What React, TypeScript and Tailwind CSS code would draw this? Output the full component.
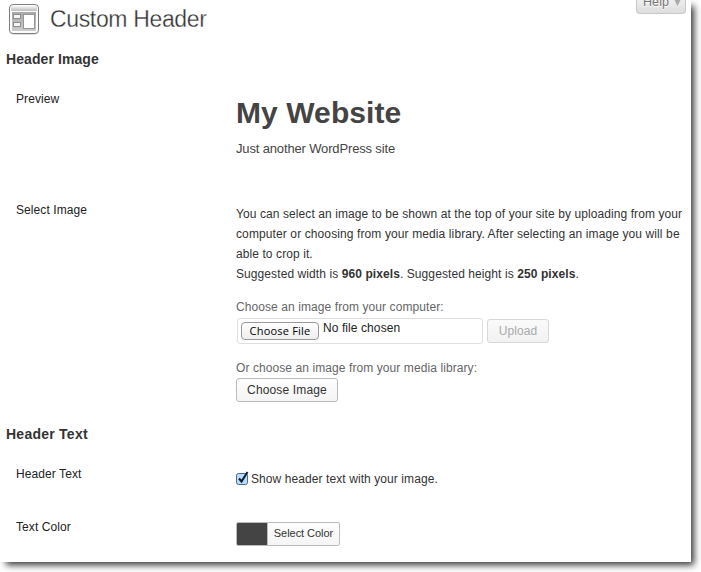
import type { ReactNode } from 'react'

function HeaderIcon() {
  return (
    <svg width="32" height="34" viewBox="0 0 32 34" className="block">
      <defs>
        <linearGradient id="bar" x1="0" y1="0" x2="0" y2="1">
          <stop offset="0" stopColor="#f4f4f4" />
          <stop offset="1" stopColor="#bcbcbc" />
        </linearGradient>
        <linearGradient id="body" x1="0" y1="0" x2="0" y2="1">
          <stop offset="0" stopColor="#a8a8a8" />
          <stop offset="1" stopColor="#cccccc" />
        </linearGradient>
      </defs>
      <rect x="1.5" y="2" width="29" height="30" rx="4" fill="#dedede" />
      <rect x="1.5" y="1.5" width="29" height="29" rx="3.5" fill="#fbfbfb" stroke="#808080" />
      <rect x="3" y="3" width="26" height="5" rx="1" fill="url(#bar)" />
      <rect x="4" y="9" width="24" height="19" fill="url(#body)" />
      <rect x="5.500" y="11.500" width="7" height="4" fill="#f5f5f5" stroke="#8d8d8d" />
      <rect x="5.500" y="19.500" width="7" height="4" fill="#f5f5f5" stroke="#8d8d8d" />
      <rect x="15.500" y="11.500" width="11" height="14" fill="#fff" stroke="#959595" />
    </svg>
  )
}

function Row({ label, className, children }: { label: string; className: string; children: ReactNode }) {
  return (
    <div className={`flex ${className}`}>
      <div className="w-[236px] shrink-0 pl-4 leading-5 text-[#222]">{label}</div>
      <div className="min-w-0 flex-1">{children}</div>
    </div>
  )
}

export default function App() {
  return (
    <div className="relative h-[572px] w-[701px] overflow-hidden bg-white font-['Liberation_Sans',Arial,sans-serif] text-[12px] tracking-[0.085px] text-[#333]">
      <div className="absolute top-[5px] left-[5px] h-[557px] w-[686px] shadow-[2px_2px_7px_1px_rgba(0,0,0,0.8)]" />
      <main className="relative h-[562px] w-[691px] bg-white">
        <div className="absolute top-0 left-[636px] flex h-[14px] w-[50px] items-end justify-between rounded-b-[4px] border border-t-0 border-[#c8c8c8] bg-linear-to-b from-[#eee] to-[#ddd] pr-[4px] pl-[6px] text-[12.5px] leading-[18px] text-[#777]">
          <span className="mb-[2px] h-[18px] [text-shadow:0_1px_0_#fff]">Help</span>
          <svg width="7" height="7" viewBox="0 0 7 7" className="mb-[7px]"><path d="M0 0h7L3.500 7z" fill="#aaa" /></svg>
        </div>
        <header className="flex h-[39px] items-start pt-[3px] pl-2">
          <HeaderIcon />
          <h1 className="ml-[10px] text-[23px] leading-8 tracking-[-0.35px] text-[#333] [-webkit-text-stroke:0.3px_#fff]">Custom Header</h1>
        </header>
        <h3 className="mt-[10px] pl-[6px] text-[14px] leading-5 font-bold">Header Image</h3>
        <Row label="Preview" className="mt-5 h-[111px]">
          <div className="pt-[7px] text-[30px] leading-[34px] font-bold text-[#444]">My Website</div>
          <div className="mt-[9px] text-[13px] leading-5 tracking-[-0.15px] text-[#444]">Just another WordPress site</div>
        </Row>
        <Row label="Select Image" className="h-[224px]">
          <p className="pt-1 leading-5 whitespace-nowrap">
            You can select an image to be shown at the top of your site by uploading from your<br />
            <span className="tracking-[0.11px]">computer or choosing from your media library. After selecting an image you will be</span><br />
            able to crop it.<br />
            Suggested width is <b>960 pixels</b>. Suggested height is <b>250 pixels</b>.
          </p>
          <div className="mt-[13px] leading-5 text-[#666]">Choose an image from your computer:</div>
          <div className="mt-px flex h-[26px] items-center pl-px">
            <div className="flex h-[26px] w-[246px] items-center rounded-[3px] border border-[#dfdfdf] pl-[3px]">
              <button className="h-[18px] w-[78px] rounded-[4px] border border-[#999] bg-linear-to-b from-white to-[#eee] font-['Open_Sans',sans-serif] text-[11px] leading-4 font-medium tracking-[0.2px] text-black">Choose File</button>
              <span className="mb-[7px] ml-[4px] text-[#222]">No file chosen</span>
            </div>
            <button className="ml-1 h-6 w-[62px] rounded-[3px] border border-[#d8d8d8] bg-linear-to-b from-[#fafafa] to-[#f2f2f2] text-[#aaa]">Upload</button>
          </div>
          <div className="mt-[14px] leading-5 text-[#666]">Or choose an image from your media library:</div>
          <button className="block h-6 w-[102px] rounded-[3px] border border-[#bbb] bg-linear-to-b from-[#fefefe] to-[#f4f4f4] leading-5 tracking-[0.15px] text-[#333]">Choose Image</button>
        </Row>
        <h3 className="pl-[6px] text-[14px] leading-5 font-bold tracking-[0.25px]">Header Text</h3>
        <Row label="Header Text" className="mt-5 h-[53px]">
          <label className="flex h-5 items-center pt-[9px]">
            <svg width="13" height="14" viewBox="0 0 13 14" className="mr-[2px] overflow-visible">
              <rect x=".5" y="1.500" width="11" height="11" rx="2" fill="#b9dafa" stroke="#456b9c" />
              <path d="M3 6.500L5.500 9.500L11.500 0" fill="none" stroke="#111827" strokeWidth="2" />
            </svg>
            Show header text with your image.
          </label>
        </Row>
        <Row label="Text Color" className="h-[45px]">
          <button className="mt-[5px] flex h-6 w-[104px] overflow-hidden rounded-[2px] border border-[#bbb] bg-linear-to-b from-[#fefefe] to-[#f4f4f4] text-[11px] leading-[21px] tracking-[-0.05px]">
            <span className="h-full w-[31px] border-r border-[#bbb] bg-[#444]" />
            <span className="flex-1">Select Color</span>
          </button>
        </Row>
      </main>
    </div>
  )
}
